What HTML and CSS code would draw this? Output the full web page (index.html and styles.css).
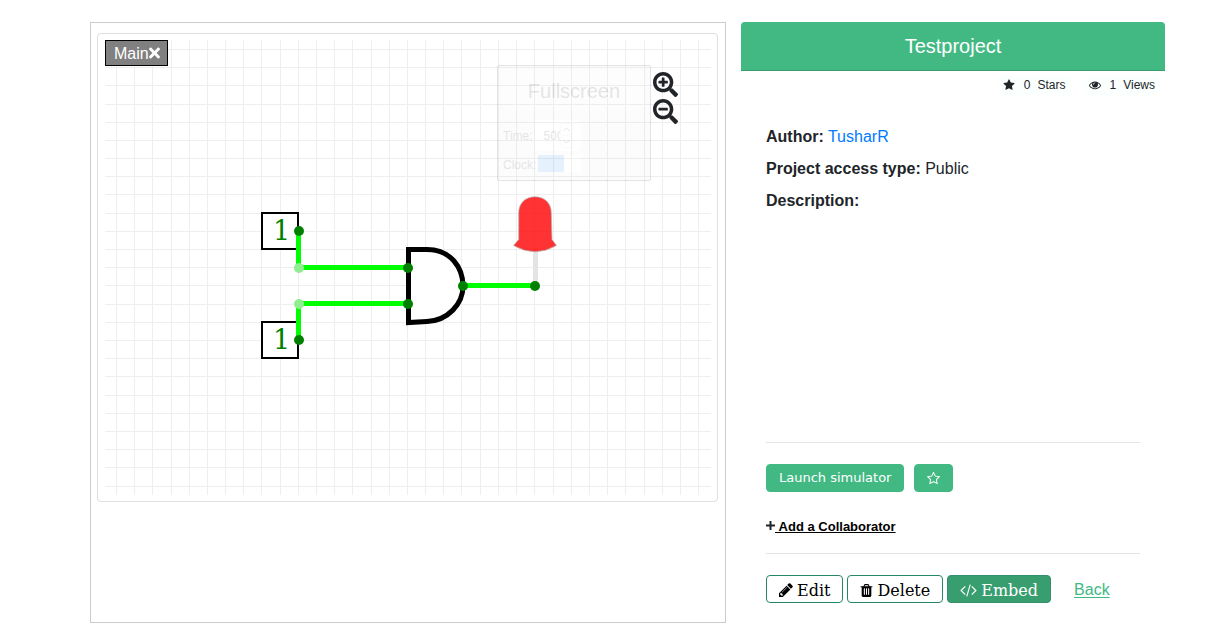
FILE: index.html
```html
<!DOCTYPE html>
<html lang="en">
<head>
<meta charset="utf-8">
<meta name="viewport" content="width=device-width, initial-scale=1">
<title>Testproject</title>
<link rel="stylesheet" href="styles.css">
</head>
<body>
<main class="project">
  <section class="preview" aria-label="Circuit preview">
    <div class="simulator">
      <svg class="circuit" viewBox="105 40 606 455" role="img" aria-label="AND gate circuit">
        <path class="grid-lines" d="M116 40v455M134 40v455M152 40v455M171 40v455M189 40v455M207 40v455M225 40v455M243 40v455M261 40v455M280 40v455M298 40v455M316 40v455M334 40v455M352 40v455M371 40v455M389 40v455M407 40v455M425 40v455M443 40v455M461 40v455M480 40v455M498 40v455M516 40v455M534 40v455M553 40v455M571 40v455M589 40v455M607 40v455M625 40v455M644 40v455M662 40v455M680 40v455M698 40v455M105 49h606M105 67h606M105 85h606M105 104h606M105 122h606M105 140h606M105 158h606M105 176h606M105 194h606M105 213h606M105 231h606M105 249h606M105 267h606M105 285h606M105 304h606M105 322h606M105 340h606M105 358h606M105 376h606M105 395h606M105 413h606M105 431h606M105 449h606M105 467h606M105 486h606" transform="translate(.5 .5)"/>
        <g class="input-box"><rect x="262" y="213" width="36" height="36"/><rect x="262" y="322" width="36" height="36"/></g>
        <g class="input-value"><text x="273" y="240">1</text><text x="273" y="349">1</text></g>
        <path class="gate" d="M408.5 249.5H427C451 249.5 463 268 463 286S448 320.500 427 321.500L408.500 322.500Z"/>
        <path class="led-stem" d="M535.500 248V286"/>
        <path class="led" d="M518.700 213C518.700 203 525.500 196.800 535 196.800S551.300 203 551.300 213L552 239.500 556.500 245.500Q535 258 513.500 245.500L518.700 239.500Z"/>
        <path class="wire" d="M298.500 231V267.500H408M298.500 340V303.500H408M463 285.500H535"/>
        <g class="node"><circle cx="299" cy="231" r="5"/><circle cx="299" cy="340" r="5"/><circle cx="408" cy="268" r="5"/><circle cx="408" cy="304" r="5"/><circle cx="463" cy="286" r="5"/><circle cx="535" cy="286" r="5"/></g>
        <g class="joint"><circle cx="299" cy="268" r="5"/><circle cx="299" cy="304" r="5"/></g>
      </svg>
      <button class="tab" type="button">Main<svg class="tab-close" viewBox="0 0 352 512" aria-hidden="true"><path d="M242.72 256l100.07-100.07c12.28-12.28 12.28-32.19 0-44.48l-22.24-22.24c-12.28-12.28-32.19-12.28-44.48 0L176 189.28 75.93 89.21c-12.28-12.28-32.19-12.28-44.48 0L9.21 111.45c-12.28 12.28-12.28 32.19 0 44.48L109.28 256 9.21 356.07c-12.28 12.28-12.28 32.19 0 44.48l22.24 22.24c12.28 12.28 32.2 12.28 44.48 0L176 322.72l100.07 100.07c12.28 12.28 32.2 12.28 44.48 0l22.24-22.24c12.28-12.28 12.28-32.19 0-44.48L242.72 256z"/></svg></button>
      <div class="controls">
        <button class="fullscreen" type="button">Fullscreen</button>
        <div class="control-row">
          <label for="time">Time:</label>
          <span class="stepper"><input id="time" class="time" type="text" inputmode="numeric" value="500"><svg class="spin" viewBox="0 0 13 25" aria-hidden="true"><rect x=".5" y=".5" width="12" height="12" rx="3"/><rect x=".5" y="12.500" width="12" height="12" rx="3"/><path d="M3.500 8l3-3 3 3M3.500 17l3 3 3-3"/></svg></span>
        </div>
        <div class="control-row clock-row">
          <label for="clock">Clock:</label>
          <input id="clock" class="clock" type="checkbox" checked>
        </div>
      </div>
      <div class="zoom">
        <button type="button" aria-label="Zoom in"><svg viewBox="0 0 512 512"><path d="M304 192v32c0 6.600-5.400 12-12 12h-56v56c0 6.600-5.400 12-12 12h-32c-6.600 0-12-5.400-12-12v-56h-56c-6.600 0-12-5.400-12-12v-32c0-6.600 5.400-12 12-12h56v-56c0-6.600 5.400-12 12-12h32c6.600 0 12 5.400 12 12v56h56c6.600 0 12 5.400 12 12zm201 284.700L476.700 505c-9.400 9.400-24.600 9.400-33.900 0L343 405.300c-4.500-4.500-7-10.600-7-17V372c-35.300 27.600-79.700 44-128 44C93.100 416 0 322.900 0 208S93.100 0 208 0s208 93.100 208 208c0 48.300-16.400 92.700-44 128h16.300c6.400 0 12.500 2.500 17 7l99.700 99.700c9.300 9.400 9.300 24.600 0 34zM344 208c0-75.200-60.800-136-136-136S72 132.800 72 208s60.800 136 136 136 136-60.800 136-136z"/></svg></button>
        <button type="button" aria-label="Zoom out"><svg viewBox="0 0 512 512"><path d="M304 192v32c0 6.600-5.400 12-12 12H124c-6.600 0-12-5.400-12-12v-32c0-6.600 5.400-12 12-12h168c6.600 0 12 5.400 12 12zm201 284.700L476.700 505c-9.400 9.400-24.600 9.400-33.900 0L343 405.300c-4.500-4.500-7-10.600-7-17V372c-35.300 27.600-79.700 44-128 44C93.100 416 0 322.900 0 208S93.100 0 208 0s208 93.100 208 208c0 48.300-16.400 92.700-44 128h16.300c6.400 0 12.500 2.500 17 7l99.700 99.700c9.300 9.400 9.300 24.600 0 34zM344 208c0-75.200-60.800-136-136-136S72 132.800 72 208s60.800 136 136 136 136-60.800 136-136z"/></svg></button>
      </div>
    </div>
  </section>

  <section class="info">
    <h1 class="title">Testproject</h1>
    <div class="stats">
      <span class="stat"><svg class="icon" viewBox="0 0 1792 1792" aria-hidden="true"><path d="M1728 647q0 22-26 48l-363 354 86 500q1 7 1 20 0 21-10.500 35.500t-30.500 14.500q-19 0-40-12l-449-236-449 236q-22 12-40 12-21 0-31.500-14.500t-10.500-35.500q0-6 2-20l86-500-364-354q-25-27-25-48 0-37 56-46l502-73 225-455q19-41 49-41t49 41l225 455 502 73q56 9 56 46z"/></svg><span>0</span><span>Stars</span></span>
      <span class="stat"><svg class="icon" viewBox="0 0 1792 1792" aria-hidden="true"><path d="M1664 960q-152-236-381-353 61 104 61 225 0 185-131.500 316.500t-316.500 131.500-316.500-131.500-131.500-316.500q0-121 61-225-229 117-381 353 133 205 333.500 326.500t434.500 121.500 434.500-121.500 333.500-326.500zm-720-384q0-20-14-34t-34-14q-125 0-214.500 89.500t-89.500 214.500q0 20 14 34t34 14 34-14 14-34q0-86 61-147t147-61q20 0 34-14t14-34zm848 384q0 34-20 69-140 230-376.500 368.500t-499.500 138.500-499.500-139-376.500-368q-20-35-20-69t20-69q140-229 376.500-368t499.500-139 499.500 139 376.500 368q20 35 20 69z"/></svg><span>1</span><span>Views</span></span>
    </div>
    <div class="details">
      <div class="facts">
        <p><b>Author:</b> <a class="author" href="#author">TusharR</a></p>
        <p><b>Project access type:</b> Public</p>
        <p><b>Description:</b></p>
      </div>
      <div class="launch">
        <a class="btn primary" href="#simulator">Launch simulator</a>
        <button class="btn primary" type="button" aria-label="Star project"><svg class="icon" viewBox="64 64 1664 1664"><path d="M1201 1004l306-297-422-62-189-382-189 382-422 62 306 297-73 421 378-199 377 199zm527-357q0 22-26 48l-363 354 86 500q1 7 1 20 0 50-41 50-19 0-40-12l-449-236-449 236q-22 12-40 12-21 0-31.500-14.500t-10.500-35.500q0-6 2-20l86-500-364-354q-25-27-25-48 0-37 56-46l502-73 225-455q19-41 49-41t49 41l225 455 502 73q56 9 56 46z"/></svg></button>
      </div>
      <div class="collaborate"><svg class="plus" viewBox="0 0 9 9" aria-hidden="true"><path d="M4.500 0v9M0 4.500h9"/></svg><a href="#collaborator">&nbsp;Add a Collaborator</a></div>
      <div class="actions">
        <a class="btn outline" href="#edit"><svg class="icon pencil" viewBox="128 128 1536 1536" aria-hidden="true"><path d="M491 1536l91-91-235-235-91 91v107h128v128h107zm523-928q0-22-22-22-10 0-17 7l-542 542q-7 7-7 17 0 22 22 22 10 0 17-7l542-542q7-7 7-17zm-54-192l416 416-832 832h-416v-416zm683 96q0 53-37 90l-166 166-416-416 166-165q36-38 90-38 53 0 91 38l235 234q37 39 37 91z"/></svg>Edit</a>
        <button class="btn outline" type="button"><svg class="icon trash" viewBox="192 0 1408 1792" aria-hidden="true"><path d="M704 1376v-704q0-14-9-23t-23-9h-64q-14 0-23 9t-9 23v704q0 14 9 23t23 9h64q14 0 23-9t9-23zm256 0v-704q0-14-9-23t-23-9h-64q-14 0-23 9t-9 23v704q0 14 9 23t23 9h64q14 0 23-9t9-23zm256 0v-704q0-14-9-23t-23-9h-64q-14 0-23 9t-9 23v704q0 14 9 23t23 9h64q14 0 23-9t9-23zm-544-992h448l-48-117q-7-9-17-11h-317q-10 2-17 11zm928 32v64q0 14-9 23t-23 9h-96v948q0 83-47 143.500t-113 60.500h-832q-66 0-113-58.500t-47-141.500v-952h-96q-14 0-23-9t-9-23v-64q0-14 9-23t23-9h309l70-167q15-37 54-63t79-26h320q40 0 79 26t54 63l70 167h309q14 0 23 9t9 23z"/></svg>Delete</button>
        <button class="btn outline embed" type="button"><svg class="icon code" viewBox="-64 0 1920 1792" aria-hidden="true"><path d="M553 1399l-50 50q-10 10-23 10t-23-10l-466-466q-10-10-10-23t10-23l466-466q10-10 23-10t23 10l50 50q10 10 10 23t-10 23l-393 393 393 393q10 10 10 23t-10 23zm591-1067l-373 1291q-4 13-15.500 19.500t-23.500 2.500l-62-17q-13-4-19.500-15.500t-2.500-24.500l373-1291q4-13 15.500-19.500t23.500-2.500l62 17q13 4 19.500 15.500t2.500 24.500zm657 651l-466 466q-10 10-23 10t-23-10l-50-50q-10-10-10-23t10-23l393-393-393-393q-10-10-10-23t10-23l50-50q10-10 23-10t23 10l466 466q10 10 10 23t-10 23z"/></svg>Embed</button>
        <a class="back" href="#back">Back</a>
      </div>
    </div>
  </section>
</main>
</body>
</html>
```

FILE: styles.css
```css
* { box-sizing: border-box; }

body {
  margin: 0;
  background: #fff;
  color: #212529;
  font: 16px/24px "Liberation Sans", Arial, sans-serif;
}

button { font: inherit; cursor: pointer; }

.project {
  display: grid;
  grid-template-columns: minmax(0, 3fr) minmax(0, 2fr);
  gap: 15px;
  min-height: 100vh;
  padding: 22px 55px 18px 90px;
}

.preview {
  padding: 10px 7px 10px 6px;
  border: 1px solid #ccc;
}

.simulator {
  position: relative;
  padding: 6px 6px 6px 7px;
  border: 1px solid #dfdfdf;
  border-radius: 4px;
}

.circuit { display: block; width: 100%; }
.grid-lines { stroke: #eee; stroke-width: 1; fill: none; }
.input-box { fill: #fff; stroke: #000; stroke-width: 2; }
.input-value { fill: green; font: 27px "DejaVu Serif", serif; }
.gate { fill: #fff; stroke: #000; stroke-width: 5; }
.led-stem { stroke: #e3e4e5; stroke-width: 5; }
.led { fill: #f00; fill-opacity: .8; stroke: #b0b8b8; stroke-width: 1; stroke-opacity: .7; }
.wire { fill: none; stroke: #0f0; stroke-width: 5; }
.node { fill: green; }
.joint { fill: #90ee90; }

.tab {
  position: absolute;
  top: 6px;
  left: 7px;
  display: flex;
  align-items: center;
  height: 26px;
  padding: 2px 7px 0 8px;
  border: 1px solid #000;
  background: #808080;
  color: #fff;
}
.tab-close { height: 16px; margin-bottom: 2px; fill: #fff; }

.controls {
  position: absolute;
  top: 31px;
  right: 66px;
  width: 154px;
  padding: 5px;
  border: 1px solid #000;
  border-radius: 2px;
  background: #e4e4e4;
  opacity: .1;
  font-size: 12px;
}
.fullscreen {
  width: 100%;
  height: 39px;
  padding: 0;
  border: 1px solid #eee;
  border-radius: 4px;
  background: #f4f4f4;
  color: #000;
  font-size: 20px;
}
.control-row {
  display: flex;
  align-items: center;
  gap: 2px;
  margin-top: 10px;
  color: #000;
}
.stepper { position: relative; display: block; }
.time {
  display: block;
  width: 46px;
  height: 31px;
  padding: 0 8px;
  border: 1px solid #fff;
  border-radius: 4px;
  background: #fff;
  font: 12px "Liberation Sans", Arial, sans-serif;
}
.spin { position: absolute; top: 3px; right: 8px; width: 13px; fill: #fff; stroke: #ccc; }
.spin path { fill: none; stroke: #000; }
.clock-row { align-items: flex-start; margin-top: 4px; line-height: 20px; }
.clock {
  appearance: none;
  width: 43px;
  height: 17px;
  margin: 0;
  background: linear-gradient(90deg, #0d8bf2 26px, #fff 26px);
}

.zoom {
  position: absolute;
  top: 38px;
  right: 39px;
  display: grid;
  gap: 2px;
}
.zoom button { padding: 0; border: 0; background: none; }
.zoom svg { display: block; width: 25px; fill: #212529; }

.info { display: flex; flex-direction: column; }

.title {
  margin: 0;
  padding: 12px;
  border-bottom: 1px solid #3a9e70;
  border-radius: 4px 4px 0 0;
  background: #42b983;
  color: #fff;
  font-size: 20px;
  font-weight: 400;
  line-height: 24px;
  text-align: center;
}

.stats {
  display: flex;
  justify-content: flex-end;
  gap: 13px;
  padding: 4px 5px 0;
  font-size: 12px;
  line-height: 20px;
}
.stat {
  display: flex;
  align-items: center;
  gap: 7px;
  padding: 0 5px;
  border-radius: 4px;
  background: #fbfffe;
}
.icon { width: 13px; flex: none; fill: currentColor; }
.stat .icon { width: 12px; margin-right: 2px; }

.details {
  display: flex;
  flex: 1;
  flex-direction: column;
  padding: 30px 25px 20px;
}
.facts { flex: 1; }
.facts p { margin: 0 0 8px; }
.author { color: #007bff; text-decoration: none; }

.launch {
  display: flex;
  gap: 10px;
  padding-top: 21px;
  border-top: 1px solid #e5e5e5;
}

.btn {
  display: flex;
  align-items: center;
  height: 28px;
  padding: 0 12px;
  border: 1px solid #26866a;
  border-radius: 4px;
  text-decoration: none;
}
.primary {
  border-color: #42b983;
  background: #42b983;
  color: #fff;
  font-family: "DejaVu Sans", sans-serif;
  font-size: 13px;
}
.outline {
  gap: 4px;
  padding: 3px 12px 0;
  background: #fff;
  color: #000;
  font-family: "DejaVu Serif", serif;
}
.outline .icon { margin-bottom: 1px; }
.outline .pencil { width: 14px; }
.outline .trash { width: 13px; height: 15px; }
.outline .code { width: 17px; }
.embed { border-color: #33906a; background: #389e6f; color: #fff; }

.collaborate {
  display: flex;
  align-items: center;
  margin: 23px 0 14px;
  font-size: 13px;
  font-weight: 700;
}
.collaborate a { color: #000; }
.plus { width: 9px; margin-bottom: 4px; stroke: #212529; stroke-width: 2; }

.actions {
  display: flex;
  align-items: center;
  gap: 4px;
  padding-top: 21px;
  border-top: 1px solid #e5e5e5;
}
.back { margin-left: 19px; padding-top: 2px; color: #42b983; text-underline-offset: 2px; }
```
